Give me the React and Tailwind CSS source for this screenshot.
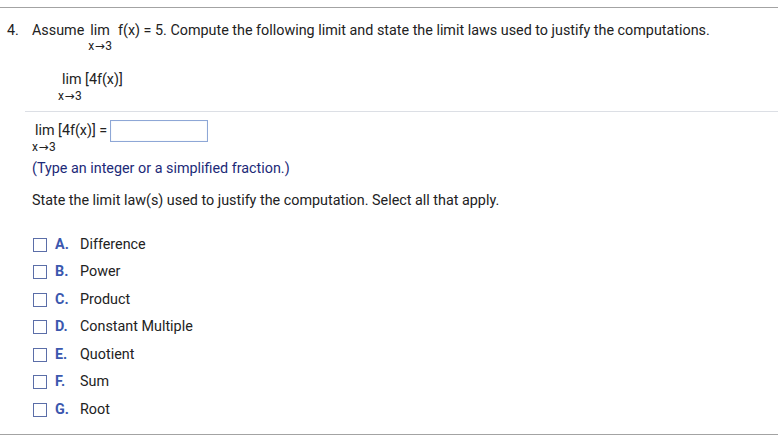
import React from 'react';

const Sub = ({ className = '' }) => (
  <span className={`text-[12px] leading-[13px] ${className}`}>
    x<span className="font-['DejaVu_Sans',sans-serif] text-[12px] mx-[0.5px]">→</span>3
  </span>
);

const options = [
  ['A.', 'Difference'],
  ['B.', 'Power'],
  ['C.', 'Product'],
  ['D.', 'Constant Multiple'],
  ['E.', 'Quotient'],
  ['F.', 'Sum'],
  ['G.', 'Root'],
];

export default function App() {
  return (
    <div className="w-[778px] h-[435px] flex flex-col bg-white font-['Roboto',sans-serif] text-[14.35px] text-[#222] overflow-hidden">
      <div className="h-[7px] shrink-0" />
      <div className="border-t border-[#a3a3a3]" />

      {/* question */}
      <div className="flex pt-[14px]">
        <span className="w-[32px] pl-[7px] leading-[17px]">4.</span>
        <div className="flex items-start">
          <span className="leading-[17px] mr-[4px]">Assume</span>
          <span className="inline-flex flex-col items-center">
            <span className="leading-[17px]">lim</span>
            <Sub className="mt-[1px]" />
          </span>
          <span className="leading-[17px] ml-[6px]">f(x) = 5. Compute the following limit and state the limit laws used to justify the computations.</span>
        </div>
      </div>

      <div className="pl-[58px] mt-[16px]">
        <span className="inline-flex flex-col items-start">
          <span className="leading-[17px] pl-[4px]">lim [4f(x)]</span>
          <Sub className="mt-[2px]" />
        </span>
      </div>

      <div className="ml-[25px] mt-[8px] border-t border-[#dcdfe5]" />

      <div className="pl-[32px] pt-[8px]">
        <div className="flex items-start">
          <span className="inline-flex flex-col items-start">
            <span className="leading-[22px] pl-[3px]">lim [4f(x)] =</span>
            <Sub className="-mt-[1px]" />
          </span>
          <div className="ml-[3px] w-[98px] h-[22px] border border-[#8ea7d6] shadow-[inset_0_0_1px_#c4d2ec]" />
        </div>
        <p className="mt-[6px] leading-[17px] text-[#1c2a78]">(Type an integer or a simplified fraction.)</p>
        <p className="mt-[15px] leading-[17px]">State the limit law(s) used to justify the computation. Select all that apply.</p>

        <div className="mt-[22px] pl-[1px]">
          {options.map(([letter, label]) => (
            <div key={letter} className="flex items-center h-[27.5px]">
              <div className="w-[14px] h-[14px] border border-[#5b6ea8]" />
              <span className="ml-[8px] w-[25px] font-bold text-[#3b57ae]">{letter}</span>
              <span>{label}</span>
            </div>
          ))}
        </div>
      </div>

      <div className="mt-auto border-t border-[#a3a3a3]" />
    </div>
  );
}
